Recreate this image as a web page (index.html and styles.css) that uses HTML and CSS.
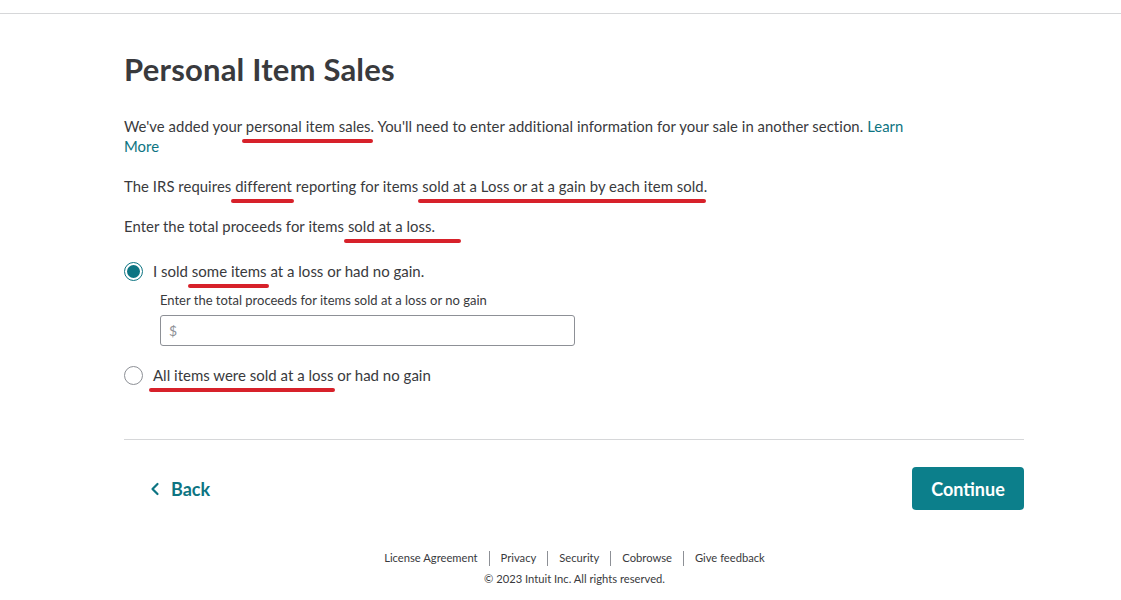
FILE: index.html
```html
<!DOCTYPE html>
<html>
<head>
<meta charset="utf-8">
<link rel="stylesheet" href="styles.css">
</head>
<body>
<div class="topbar"></div>
<main class="page">
  <h1 class="title">Personal Item Sales</h1>
  <p class="para">We've added your <span class="mark">personal item sales</span>. You'll need to enter additional information for your sale in another section. <a class="link" href="#">Learn More</a></p>
  <p class="para">The IRS requires <span class="mark">different</span> reporting for items <span class="mark">sold at a Loss or at a gain by each item sold</span>.</p>
  <p class="para">Enter the total proceeds for items <span class="mark mark-long">sold at a loss.</span></p>

  <div class="options">
    <label class="option">
      <span class="radio checked"><span class="dot"></span></span>
      <span class="opt-text">I sold <span class="mark">some items</span> at a loss or had no gain.</span>
    </label>
    <div class="sub">
      <div class="sub-label">Enter the total proceeds for items sold at a loss or no gain</div>
      <div class="input"><span class="dollar">$</span></div>
    </div>
    <label class="option">
      <span class="radio"></span>
      <span class="opt-text"><span class="mark">All items were sold at a loss</span> or had no gain</span>
    </label>
  </div>

  <div class="divider"></div>

  <div class="nav">
    <a class="back" href="#">
      <svg width="10" height="14" viewBox="0 0 10 14"><path d="M7.5 2 L2.5 7 L7.5 12" fill="none" stroke="#0d7482" stroke-width="2.2" stroke-linecap="round" stroke-linejoin="round"/></svg>
      <span>Back</span>
    </a>
    <button class="continue">Continue</button>
  </div>
</main>
<footer class="footer">
  <div class="links">
    <span>License Agreement</span><span class="sep"></span>
    <span>Privacy</span><span class="sep"></span>
    <span>Security</span><span class="sep"></span>
    <span>Cobrowse</span><span class="sep"></span>
    <span>Give feedback</span>
  </div>
  <div class="copy">© 2023 Intuit Inc. All rights reserved.</div>
</footer>
</body>
</html>
```

FILE: styles.css
```css
* { box-sizing: border-box; }
html, body { margin: 0; padding: 0; background: #fff; }
body {
  font-family: Lato, "Noto Sans", sans-serif;
  color: #393a3d;
  width: 1121px;
}
.topbar {
  height: 14px;
  border-bottom: 1px solid #d6d7d9;
}
.page {
  width: 900px;
  margin-left: 124px;
  padding-top: 36px;
}
.title {
  margin: 0;
  font-size: 31px;
  font-weight: 700;
  color: #393a3d;
  line-height: 38px;
  letter-spacing: 0.2px;
}
.para {
  margin: 0;
  font-size: 14.85px;
  line-height: 20px;
  width: 800px;
  color: #393a3d;
  letter-spacing: 0.06px;
}
.title + .para { margin-top: 28px; }
.para + .para { margin-top: 20px; }
.link { color: #0d7482; text-decoration: none; }
.mark { position: relative; }
.mark::after {
  content: "";
  position: absolute;
  left: -4px;
  right: -2px;
  bottom: -8px;
  height: 4px;
  border-radius: 2px;
  background: #d7212a;
}
.mark-long::after { right: -26px; }

.options { margin-top: 25px; }
.option {
  display: flex;
  align-items: center;
  gap: 10px;
  font-size: 15px;
  line-height: 20px;
}
.radio {
  width: 19px;
  height: 19px;
  border-radius: 50%;
  border: 1px solid #8d9096;
  display: flex;
  align-items: center;
  justify-content: center;
  flex: none;
}
.radio.checked { border: 1.5px solid #0d7482; }
.dot {
  width: 13px;
  height: 13px;
  border-radius: 50%;
  background: #0d7482;
}
.sub {
  margin-left: 36px;
  padding-top: 11px;
}
.sub-label {
  font-size: 13px;
  line-height: 16px;
  color: #393a3d;
}
.input {
  margin-top: 7px;
  width: 415px;
  height: 31px;
  border: 1px solid #8d9096;
  border-radius: 3px;
  display: flex;
  align-items: center;
  padding-left: 8px;
}
.dollar { font-size: 14px; color: #8d9096; }
.sub + .option { margin-top: 19px; }

.divider {
  margin-top: 54px;
  height: 1px;
  background: #d6d7d9;
}
.nav {
  display: flex;
  justify-content: space-between;
  align-items: center;
  margin-top: 27px;
}
.back {
  display: flex;
  align-items: center;
  gap: 11px;
  margin-left: 26px;
  color: #0d7482;
  text-decoration: none;
  font-size: 18px;
  font-weight: 700;
}
.continue {
  width: 112px;
  height: 43px;
  border: none;
  border-radius: 4px;
  background: #0c7f8b;
  color: #fff;
  font-family: inherit;
  font-size: 18px;
  font-weight: 700;
}
.footer {
  margin-top: 40px;
  padding-left: 28px;
  text-align: center;
  font-size: 11.2px;
  color: #393a3d;
}
.links {
  display: flex;
  justify-content: center;
  align-items: center;
  gap: 11px;
  line-height: 16px;
}
.sep {
  width: 1px;
  height: 15px;
  background: #8d9096;
}
.copy { margin-top: 6px; line-height: 14px; }
```
